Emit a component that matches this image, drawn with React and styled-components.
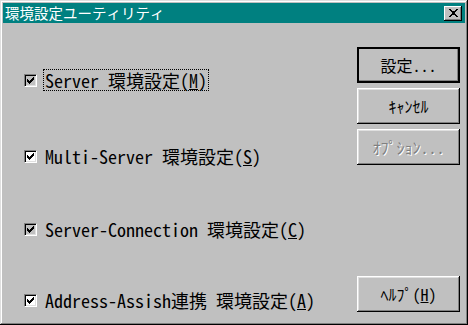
import React from 'react'
import styled, {createGlobalStyle} from 'styled-components'

const GlobalStyle = createGlobalStyle`
  html, body {
    margin: 0;
    padding: 0;
    background: #c0c0c0;
  }
`

const Window = styled.div`
  width: 468px;
  height: 325px;
  box-sizing: border-box;
  padding: 3px;
  background: #c0c0c0;
  box-shadow: inset -1px -1px #000, inset 1px 1px #dfdfdf,
    inset -2px -2px #808080, inset 2px 2px #fff;
  display: flex;
  flex-direction: column;
  font-family: "Noto Sans Mono CJK JP", "Noto Sans CJK JP", sans-serif;
`

const TitleBar = styled.div`
  height: 20px;
  background: #008080;
  color: #fff;
  display: flex;
  align-items: center;
  justify-content: space-between;
  padding: 0 3px 0 2px;
`

const Title = styled.span`
  font-size: 14.5px;
  line-height: 20px;
`

const CloseButton = styled.div`
  width: 18px;
  height: 15px;
  box-sizing: border-box;
  background: #c0c0c0;
  box-shadow: inset -1px -1px #000, inset 1px 1px #fff, inset -2px -2px #808080;
  display: flex;
  align-items: center;
  justify-content: center;
`

const Body = styled.div`
  flex: 1;
  display: flex;
  padding: 24px 5px 11px 21px;
`

const Options = styled.div`
  flex: 1;
  display: flex;
  flex-direction: column;
`

const Row = styled.div`
  display: flex;
  align-items: center;
  height: 24px;
  margin-top: ${p => p.$top}px;
`

const Box = styled.span`
  width: 13px;
  height: 13px;
  box-sizing: border-box;
  border: 1px solid;
  border-color: #808080 #fff #fff #808080;
  box-shadow: inset 1px 1px #000, inset -1px -1px #dfdfdf;
  background: ${p => (p.$pressed ? '#c0c0c0' : '#fff')};
  display: flex;
  align-items: center;
  justify-content: center;
`

const Label = styled.span`
  margin-left: 6px;
  padding: 0 1px;
  border: 1px dotted ${p => (p.$focused ? '#000' : 'transparent')};
  font-size: 18px;
  line-height: 20px;
  color: #000;
  white-space: nowrap;
`

const Key = styled.span`
  text-decoration: underline;
`

const Buttons = styled.div`
  width: 103px;
  display: flex;
  flex-direction: column;
  gap: 5px;
`

const Button = styled.div`
  height: 36px;
  box-sizing: border-box;
  display: flex;
  align-items: center;
  justify-content: center;
  font-size: 16px;
  line-height: 20px;
  color: ${p => (p.$disabled ? '#808080' : '#000')};
  text-shadow: ${p => (p.$disabled ? '1px 1px #fff' : 'none')};
  background: #c0c0c0;
  border: ${p => (p.$default ? '2px solid #000' : 'none')};
  box-shadow: ${p =>
    p.$default
      ? 'inset -1px -1px #808080'
      : 'inset -1px -1px #000, inset 1px 1px #fff, inset -2px -2px #808080, inset 2px 2px #dfdfdf'};
  margin-top: ${p => (p.$bottom ? 'auto' : '0')};
  white-space: nowrap;
`

const Check = () => (
  <svg width="7" height="7" viewBox="0 0 7 7" shapeRendering="crispEdges">
    <rect x="6" y="0" width="1" height="1" />
    <rect x="5" y="1" width="2" height="1" />
    <rect x="0" y="2" width="1" height="1" />
    <rect x="4" y="2" width="3" height="1" />
    <rect x="0" y="3" width="2" height="1" />
    <rect x="3" y="3" width="3" height="1" />
    <rect x="0" y="4" width="5" height="1" />
    <rect x="1" y="5" width="3" height="1" />
    <rect x="2" y="6" width="1" height="1" />
  </svg>
)

const CloseGlyph = () => (
  <svg width="9" height="8" viewBox="0 0 9 8" shapeRendering="crispEdges">
    <path d="M0 0h2v1h-2zM7 0h2v1h-2zM1 1h2v1h-2zM6 1h2v1h-2zM2 2h5v1h-5zM3 3h3v1h-3zM3 4h3v1h-3zM2 5h5v1h-5zM1 6h2v1h-2zM6 6h2v1h-2zM0 7h2v1h-2zM7 7h2v1h-2z" fill="#000" />
  </svg>
)

const options = [
  {pre: 'Server 環境設定(', key: 'M', top: 21, pressed: true, focused: true},
  {pre: 'Multi-Server 環境設定(', key: 'S', top: 52},
  {pre: 'Server-Connection 環境設定(', key: 'C', top: 49, pressed: true},
  {pre: 'Address-Assish連携 環境設定(', key: 'A', top: 47},
]

export default function App() {
  return (
    <Window>
      <GlobalStyle />
      <TitleBar>
        <Title>環境設定ユーティリティ</Title>
        <CloseButton><CloseGlyph /></CloseButton>
      </TitleBar>
      <Body>
        <Options>
          {options.map(o => (
            <Row key={o.key} $top={o.top}>
              <Box $pressed={o.pressed}><Check /></Box>
              <Label $focused={o.focused}>{o.pre}<Key>{o.key}</Key>)</Label>
            </Row>
          ))}
        </Options>
        <Buttons>
          <Button $default>設定...</Button>
          <Button>ｷｬﾝｾﾙ</Button>
          <Button $disabled>ｵﾌﾟｼｮﾝ...</Button>
          <Button $bottom>ﾍﾙﾌﾟ(<Key>H</Key>)</Button>
        </Buttons>
      </Body>
    </Window>
  )
}
